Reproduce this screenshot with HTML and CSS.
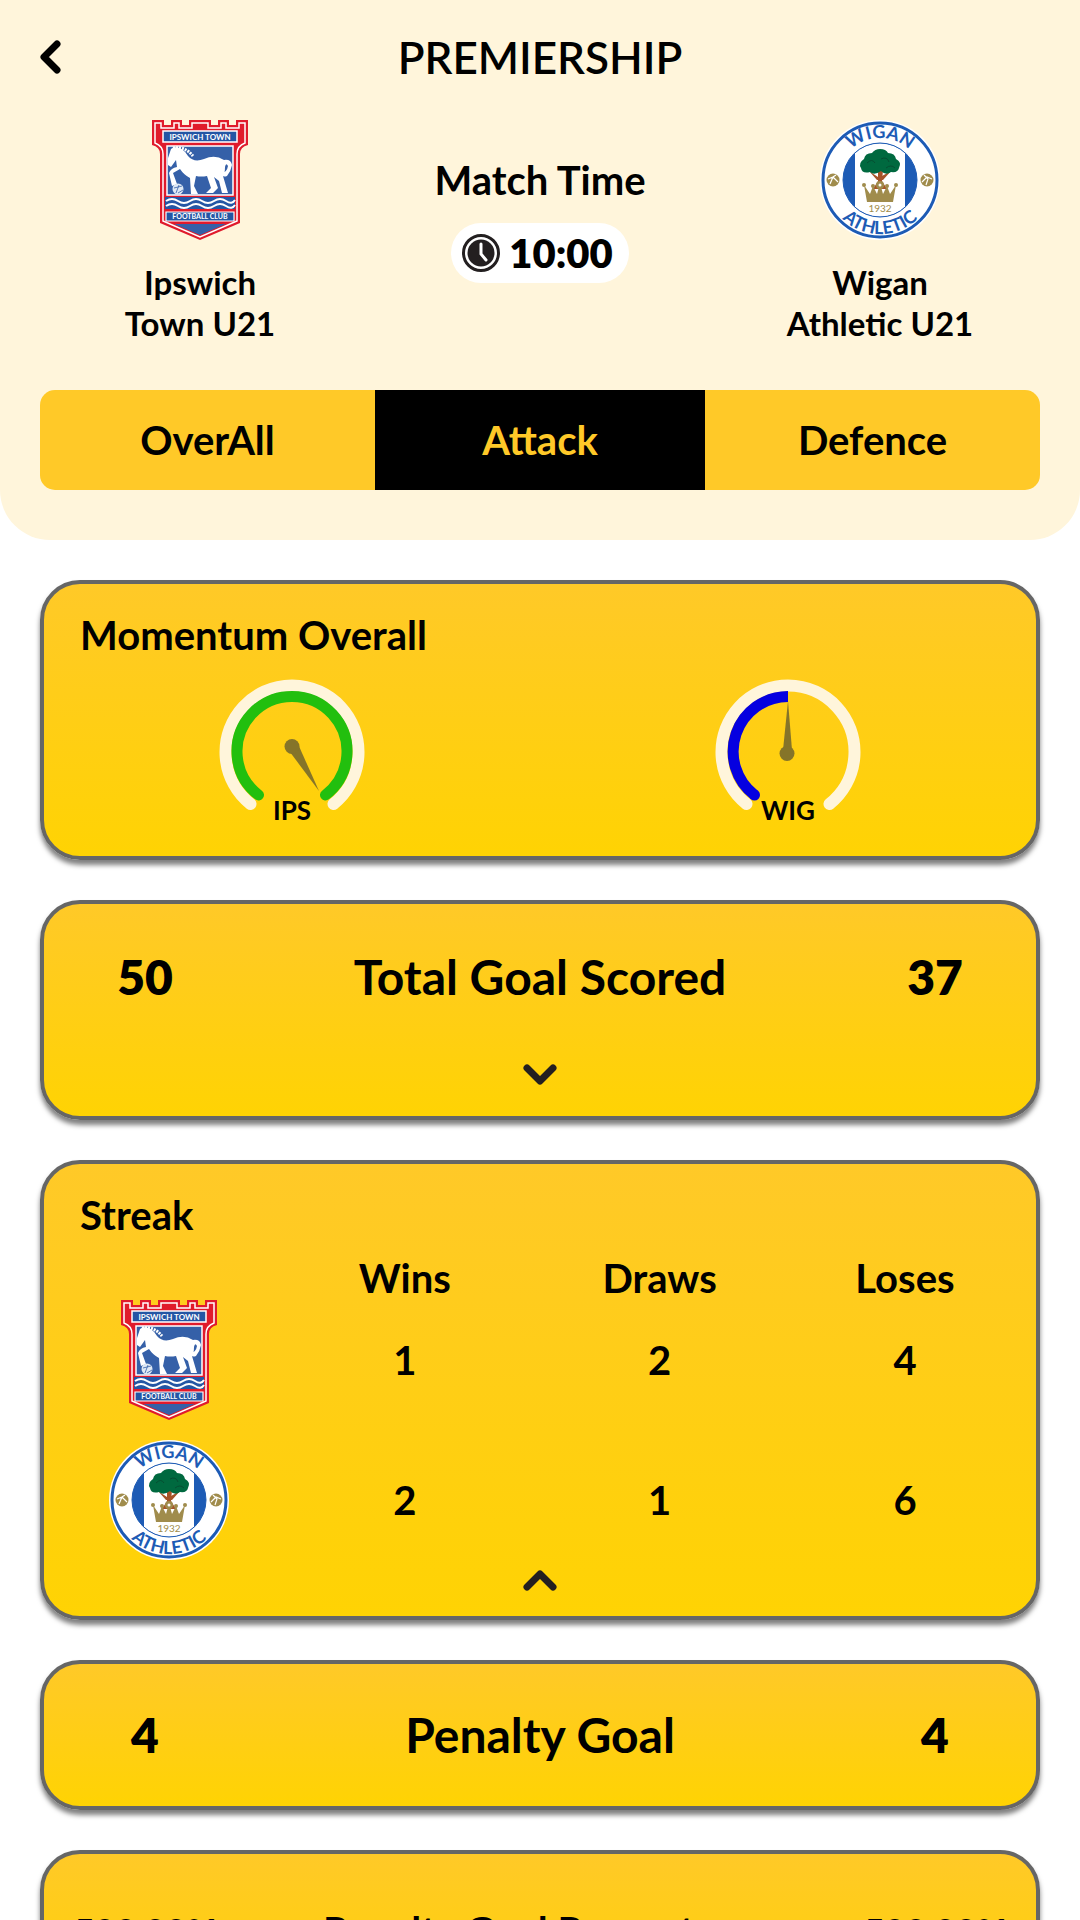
FILE: index.html
```html
<!DOCTYPE html>
<html lang="en">
<head>
<meta charset="utf-8">
<meta name="viewport" content="width=device-width, initial-scale=1">
<title>Premiership</title>
<link rel="stylesheet" href="styles.css">
</head>
<body>
<svg class="defs" aria-hidden="true">
  <defs>
    <symbol id="ipswich" viewBox="0 0 96 120">
      <path d="M0 0H12V5H19V0H30V5H37V0H59V5H66V0H77V5H84V0H96V25Q88 27 88 34V103L48 120L8 103V34Q8 27 0 25Z" fill="#e01b2c"/>
      <path d="M3 3H9V8H22V3H27V8H40V3H56V8H69V3H74V8H87V3H93V23Q85 26 85 34V101L48 117L11 101V34Q11 26 3 23Z" fill="#e01b2c" stroke="#fff" stroke-width="1.5"/>
      <path d="M11 11H85V22H11Z" fill="#2456a4" stroke="#fff" stroke-width="1.5"/>
      <text x="48" y="20" text-anchor="middle" class="crest-name">IPSWICH TOWN</text>
      <path d="M15 26H81V75H15Z" fill="#3560a8" stroke="#fff" stroke-width="1.5"/>
      <path d="M16 38L19 29L22 27Q31 27 36 36Q42 43 52 39Q63 34 72 40Q79 39 80 45Q79 51 75 56Q70 58 70 53Q75 52 76 46Q74 42 73 47Q73 53 71 56L76 73H70L67 61L62 57L66 68L61 73H54L59 68L55 56Q49 57 44 56L42 66L46 74H39L38 58Q32 55 28 49L21 53L25 64L20 66L17 53Q19 48 25 47L24 40L19 47L16 45Z" fill="#fff"/>
      <path d="M21 28Q33 26 41 36" fill="none" stroke="#fff" stroke-width="3" stroke-dasharray="2 1"/>
      <circle cx="26" cy="69" r="5.5" fill="#dfe9f4"/>
      <path d="M22 68L30 66M24 73L27 65M26 73L31 70" stroke="#3560a8" stroke-width=".8"/>
      <path d="M13 77H83V89H13Z" fill="#2456a4"/>
      <path d="M14 81Q20 77 26 81T38 81T50 81T62 81T74 81T83 80M14 86Q20 82 26 86T38 86T50 86T62 86T74 86T83 85" fill="none" stroke="#fff" stroke-width="2"/>
      <path d="M14 92H82V101H14Z" fill="#2456a4" stroke="#fff" stroke-width="1.2"/>
      <text x="48" y="99" text-anchor="middle" class="crest-club">FOOTBALL CLUB</text>
      <path d="M22 104H74L48 115Z" fill="#3560a8"/>
    </symbol>
    <symbol id="wigan" viewBox="0 0 120 120">
      <circle cx="60" cy="60" r="60" fill="#fff"/>
      <circle cx="60" cy="60" r="57" fill="#fff" stroke="#1d5bb5" stroke-width="3"/>
      <circle cx="60" cy="60" r="37" fill="#1d5bb5"/>
      <path d="M35 33A37 37 0 0 1 85 33V87A37 37 0 0 1 35 87Z" fill="#fff"/>
      <circle cx="60" cy="60" r="37" fill="none" stroke="#1d5bb5" stroke-width="1"/>
      <path d="M58 50H63L62 61L67 69H53L58 61Z" fill="#a65328"/>
      <path d="M49 51L58 57L62 56L71 51L63 60H57Z" fill="#a65328"/>
      <path d="M60 29Q66 29 68 33Q75 33 76 39Q82 42 79 48Q78 53 71 52Q66 56 61 51Q54 56 50 52Q42 54 41 48Q38 43 44 39Q45 33 52 33Q55 29 60 29Z" fill="#00693f"/>
      <path d="M47 43Q52 38 55 43M61 39Q67 36 69 42M66 48Q71 44 75 48" fill="none" stroke="#064e32" stroke-width="1"/>
      <path d="M44 65L50 74L53 66L57 74L60 63L63 74L67 66L70 74L76 65L73 82H47Z" fill="#a08c4c"/>
      <g fill="#a08c4c"><circle cx="60" cy="65" r="4"/><circle cx="53" cy="66" r="2"/><circle cx="67" cy="66" r="2"/><circle cx="44" cy="65" r="2"/><circle cx="76" cy="65" r="2"/></g>
      <circle cx="60" cy="65" r="1.5" fill="#fff"/>
      <text x="60" y="92" text-anchor="middle" class="crest-year">1932</text>
      <g fill="#a08c4c"><circle cx="13" cy="60" r="6.5"/><circle cx="107" cy="60" r="6.5"/></g>
      <path d="M8 59L13 57L18 62M10 64L13 57L16 55M102 62L107 57L112 59M104 55L108 59L106 65" fill="none" stroke="#fff" stroke-width="1.2"/>
      <path id="arc-top" d="M18 60A42 42 0 0 1 102 60" fill="none"/>
      <path id="arc-bottom" d="M6 60A54 54 0 0 0 114 60" fill="none"/>
      <text class="crest-ring" text-anchor="middle"><textPath href="#arc-top" startOffset="50%">WIGAN</textPath></text>
      <text class="crest-ring" text-anchor="middle"><textPath href="#arc-bottom" startOffset="50%">ATHLETIC</textPath></text>
    </symbol>
  </defs>
</svg>

<header class="header">
  <div class="topbar">
    <button class="back" aria-label="Back"><svg width="20" height="34" viewBox="0 0 20 34"><path d="M17 4L4 17L17 30" fill="none" stroke="#000" stroke-width="7" stroke-linecap="round" stroke-linejoin="round"/></svg></button>
    <h1 class="title">PREMIERSHIP</h1>
  </div>
  <div class="match">
    <div class="team">
      <svg class="crest" role="img" aria-label="Ipswich Town crest"><use href="#ipswich"/></svg>
      <p class="team-name">Ipswich<br>Town U21</p>
    </div>
    <div class="clock">
      <p class="clock-label">Match Time</p>
      <p class="pill">
        <svg width="40" height="40" viewBox="0 0 40 40" aria-hidden="true"><circle cx="20" cy="20" r="17.5" fill="#fff" stroke="#231f20" stroke-width="3"/><circle cx="20" cy="20" r="13.5" fill="#231f20"/><path d="M20 11V21L25 27" fill="none" stroke="#fff" stroke-width="3" stroke-linecap="round"/></svg>
        <span>10:00</span>
      </p>
    </div>
    <div class="team">
      <svg class="crest" role="img" aria-label="Wigan Athletic crest"><use href="#wigan"/></svg>
      <p class="team-name">Wigan<br>Athletic U21</p>
    </div>
  </div>
  <nav class="tabs">
    <button class="tab">OverAll</button>
    <button class="tab active" aria-current="page">Attack</button>
    <button class="tab">Defence</button>
  </nav>
</header>

<main class="cards">
  <section class="card">
    <h2 class="card-title">Momentum Overall</h2>
    <div class="gauges">
      <figure class="gauge">
        <svg width="146" height="120" viewBox="0 0 146 120" aria-hidden="true">
          <path d="M31.5 124A66.500 66.500 0 1 1 114.500 124" fill="none" stroke="#fff5db" stroke-width="12" stroke-linecap="round"/>
          <path d="M39.500 115A55 55 0 1 1 106.500 115" fill="none" stroke="#22bf0e" stroke-width="11" stroke-linecap="round"/>
          <path d="M68 68L79 64L100 111Z" fill="#857429"/><circle cx="73" cy="66.500" r="7.500" fill="#857429"/>
        </svg>
        <figcaption>IPS</figcaption>
      </figure>
      <figure class="gauge">
        <svg width="146" height="120" viewBox="0 0 146 120" aria-hidden="true">
          <path d="M31.500 124A66.500 66.500 0 1 1 114.500 124" fill="none" stroke="#fff5db" stroke-width="12" stroke-linecap="round"/>
          <path d="M39.500 115A55 55 0 0 1 73 16.500" fill="none" stroke="#0500e0" stroke-width="11"/><circle cx="39.500" cy="115" r="5.500" fill="#0500e0"/>
          <path d="M68 70L73 21L77 70Z" fill="#857429"/><circle cx="72" cy="73.500" r="7.500" fill="#857429"/>
        </svg>
        <figcaption>WIG</figcaption>
      </figure>
    </div>
  </section>

  <section class="card">
    <div class="stat">
      <strong>50</strong><h2>Total Goal Scored</h2><strong>37</strong>
    </div>
    <button class="toggle" aria-label="Show more"><svg width="34" height="20" viewBox="0 0 34 20"><path d="M4 3L17 16L30 3" fill="none" stroke="#231f20" stroke-width="7" stroke-linecap="round" stroke-linejoin="round"/></svg></button>
  </section>

  <section class="card">
    <h2 class="card-title">Streak</h2>
    <div class="streak-wrap">
      <table class="streak">
        <colgroup><col class="col-team"><col class="col-wins"><col class="col-draws"><col class="col-loses"></colgroup>
        <thead><tr><td></td><th scope="col">Wins</th><th scope="col">Draws</th><th scope="col">Loses</th></tr></thead>
        <tbody>
          <tr><th scope="row"><svg class="crest" role="img" aria-label="Ipswich Town"><use href="#ipswich"/></svg></th><td>1</td><td>2</td><td>4</td></tr>
          <tr><th scope="row"><svg class="crest" role="img" aria-label="Wigan Athletic"><use href="#wigan"/></svg></th><td>2</td><td>1</td><td>6</td></tr>
        </tbody>
      </table>
    </div>
    <button class="toggle less" aria-label="Show less"><svg width="34" height="20" viewBox="0 0 34 20"><path d="M4 17L17 4L30 17" fill="none" stroke="#231f20" stroke-width="7" stroke-linecap="round" stroke-linejoin="round"/></svg></button>
  </section>

  <section class="card">
    <div class="stat compact"><strong>4</strong><h2>Penalty Goal</h2><strong>4</strong></div>
  </section>

  <section class="card">
    <div class="stat percent"><strong>500.00%</strong><h2>Penalty Goal Percentage</h2><strong>500.00%</strong></div>
  </section>
</main>
</body>
</html>
```
FILE: styles.css
```css
* { box-sizing: border-box; }
body {
  margin: 0;
  background: #fff;
  color: #000;
  font-family: Lato, "Open Sans", sans-serif;
  font-size: 40px;
  line-height: 50px;
  font-weight: 700;
}
h1, h2, p, figure { margin: 0; font-weight: 700; }
button {
  font: inherit;
  color: inherit;
  background: none;
  border: 0;
  padding: 0;
  cursor: pointer;
}
svg { display: block; overflow: visible; }
.defs { position: absolute; width: 0; height: 0; }
.crest-name, .crest-club { fill: #fff; font: 700 8px Lato, sans-serif; }
.crest-club { font-size: 7px; }
.crest-year { fill: #a08c4c; font: 400 10px Lato, sans-serif; }
.crest-ring { fill: #1d5bb5; font: 700 18px Lato, sans-serif; }

.header {
  background: #fff5db;
  border-radius: 0 0 50px 50px;
  padding: 30px 40px 50px;
}
.topbar { display: grid; grid-template-columns: 40px 1fr 40px; align-items: center; }
.title { font-size: 44px; line-height: 54px; text-align: center; font-weight: 600; }
.match {
  display: grid;
  grid-template-columns: 320px 1fr 320px;
  padding: 36px 0 46px;
}
.team { display: grid; justify-items: center; row-gap: 22px; }
.crest { width: 120px; height: 120px; }
.team-name { font-size: 33px; line-height: 41px; text-align: center; }
.clock { display: flex; flex-direction: column; align-items: center; gap: 18px; padding-top: 35px; }
.pill {
  display: flex;
  align-items: center;
  gap: 8px;
  height: 60px;
  padding: 0 16px 0 10px;
  border-radius: 30px;
  background: #fff;
  font-weight: 800;
}
.tabs {
  display: grid;
  grid-template-columns: 335fr 330fr 335fr;
  height: 100px;
  border-radius: 15px;
  overflow: hidden;
  background: #ffc928;
}
.active { background: #000; color: #ffc928; }

.cards { display: grid; gap: 40px; padding: 40px; }
.card {
  border: 4px solid #666;
  border-radius: 40px;
  background: linear-gradient(#ffc928, #ffd303);
  box-shadow: 0 5px 5px rgba(0, 0, 0, .5);
}
.card-title { font-size: 40px; line-height: 50px; padding: 26px 36px 0; }
.gauges { display: grid; grid-template-columns: 1fr 1fr; padding: 20px 0 36px; }
.gauge { display: grid; justify-items: center; }
.gauge figcaption { font-size: 26px; line-height: 20px; }
.stat {
  display: grid;
  grid-template-columns: 202px 1fr 202px;
  align-items: center;
  min-height: 146px;
  text-align: center;
  font-size: 48px;
}
.stat h2 { font-size: 48px; line-height: 60px; }
.stat strong { font-weight: 800; }
.compact { min-height: 142px; }
.percent { min-height: 154px; font-size: 36px; }
.percent h2 { font-size: 40px; }
.toggle { display: block; margin: 0 auto; padding: 15px 20px 31px; }
.less { padding: 0 20px 26px; }
.streak-wrap { padding-right: 30px; }
.streak { width: 100%; border-collapse: collapse; table-layout: fixed; text-align: center; }
.col-team { width: 26%; }
.col-wins { width: 23%; }
.col-draws { width: 30%; }
.col-loses { width: 21%; }
.streak td, .streak th { padding: 0; font-weight: 600; }
.streak thead th { padding-top: 26px; line-height: 24px; font-weight: 700; }
.streak tbody td, .streak tbody th { height: 140px; }
.streak tbody td { font-weight: 700; }
.streak .crest { margin: auto; }
```
